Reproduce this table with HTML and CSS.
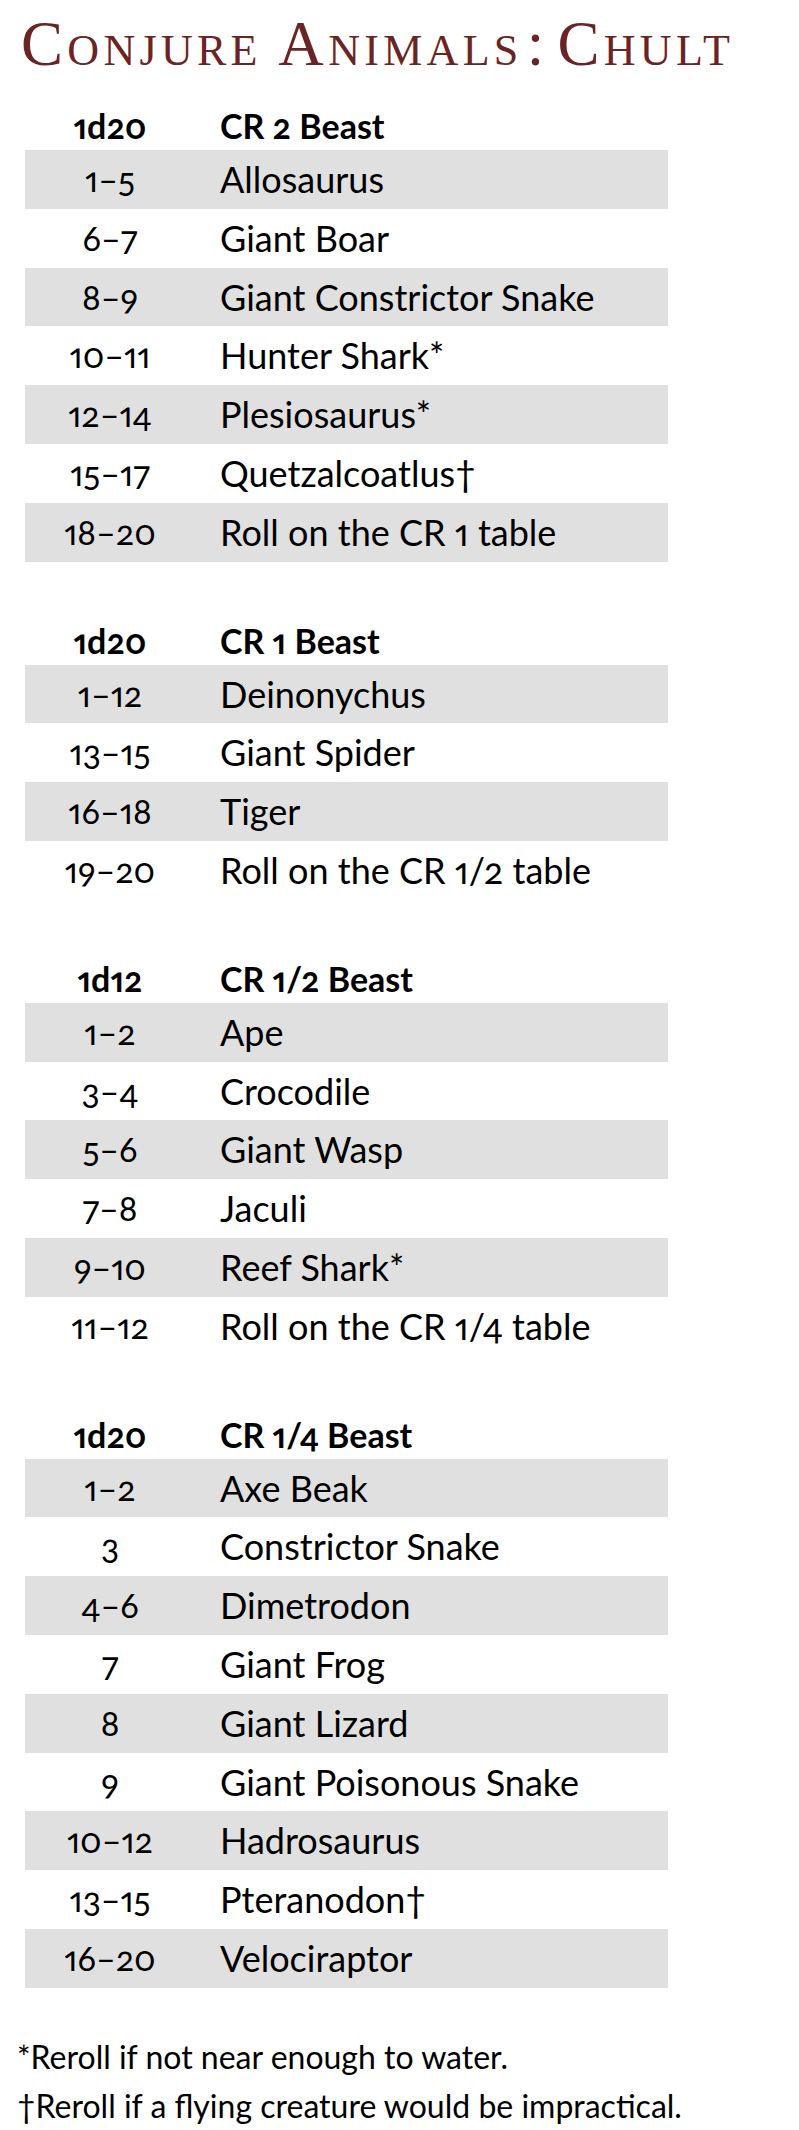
FILE: index.html
```html
<!DOCTYPE html>
<html lang="en">
<head>
<meta charset="utf-8">
<title>Conjure Animals: Chult</title>
<link rel="stylesheet" href="styles.css">
</head>
<body>
<main class="page">
  <h1 class="title">Conjure Animals<span class="colon">:</span>Chult</h1>

  <section class="tables">
    <table class="roll">
      <thead><tr><th class="die">1d20</th><th class="res">CR 2 Beast</th></tr></thead>
      <tbody>
        <tr><td class="die">1–5</td><td class="res">Allosaurus</td></tr>
        <tr><td class="die">6–7</td><td class="res">Giant Boar</td></tr>
        <tr><td class="die">8–9</td><td class="res">Giant Constrictor Snake</td></tr>
        <tr><td class="die">10–11</td><td class="res">Hunter Shark*</td></tr>
        <tr><td class="die">12–14</td><td class="res">Plesiosaurus*</td></tr>
        <tr><td class="die">15–17</td><td class="res">Quetzalcoatlus†</td></tr>
        <tr><td class="die">18–20</td><td class="res">Roll on the CR 1 table</td></tr>
      </tbody>
    </table>

    <table class="roll">
      <thead><tr><th class="die">1d20</th><th class="res">CR 1 Beast</th></tr></thead>
      <tbody>
        <tr><td class="die">1–12</td><td class="res">Deinonychus</td></tr>
        <tr><td class="die">13–15</td><td class="res">Giant Spider</td></tr>
        <tr><td class="die">16–18</td><td class="res">Tiger</td></tr>
        <tr><td class="die">19–20</td><td class="res">Roll on the CR 1/2 table</td></tr>
      </tbody>
    </table>

    <table class="roll">
      <thead><tr><th class="die">1d12</th><th class="res">CR 1/2 Beast</th></tr></thead>
      <tbody>
        <tr><td class="die">1–2</td><td class="res">Ape</td></tr>
        <tr><td class="die">3–4</td><td class="res">Crocodile</td></tr>
        <tr><td class="die">5–6</td><td class="res">Giant Wasp</td></tr>
        <tr><td class="die">7–8</td><td class="res">Jaculi</td></tr>
        <tr><td class="die">9–10</td><td class="res">Reef Shark*</td></tr>
        <tr><td class="die">11–12</td><td class="res">Roll on the CR 1/4 table</td></tr>
      </tbody>
    </table>

    <table class="roll">
      <thead><tr><th class="die">1d20</th><th class="res">CR 1/4 Beast</th></tr></thead>
      <tbody>
        <tr><td class="die">1–2</td><td class="res">Axe Beak</td></tr>
        <tr><td class="die">3</td><td class="res">Constrictor Snake</td></tr>
        <tr><td class="die">4–6</td><td class="res">Dimetrodon</td></tr>
        <tr><td class="die">7</td><td class="res">Giant Frog</td></tr>
        <tr><td class="die">8</td><td class="res">Giant Lizard</td></tr>
        <tr><td class="die">9</td><td class="res">Giant Poisonous Snake</td></tr>
        <tr><td class="die">10–12</td><td class="res">Hadrosaurus</td></tr>
        <tr><td class="die">13–15</td><td class="res">Pteranodon†</td></tr>
        <tr><td class="die">16–20</td><td class="res">Velociraptor</td></tr>
      </tbody>
    </table>
  </section>

  <section class="notes">
    <p class="note">*Reroll if not near enough to water.</p>
    <p class="note">†Reroll if a flying creature would be impractical.</p>
  </section>
</main>
</body>
</html>
```

FILE: styles.css
```css
html, body {
  margin: 0;
  padding: 0;
  background: #ffffff;
}

.page {
  display: flex;
  flex-direction: column;
  font-family: Lato, "Noto Sans", sans-serif;
  color: #000000;
  font-variant-numeric: oldstyle-nums proportional-nums;
}

.title {
  margin: 0;
  padding: 14px 0 0 21px;
  font-family: "Liberation Serif", serif;
  font-weight: normal;
  font-variant: small-caps;
  font-size: 63px;
  line-height: 60px;
  letter-spacing: 4.3px;
  color: #6a2424;
}

.colon {
  margin: 0 9px 0 4px;
}

.tables {
  display: flex;
  flex-direction: column;
  gap: 53px;
  margin: 26px 0 0 25px;
  width: 643px;
}

.roll {
  width: 643px;
  border-collapse: collapse;
  border-spacing: 0;
  font-size: 34px;
}

.roll th,
.roll td {
  padding: 0;
  vertical-align: middle;
}

.roll thead tr {
  height: 50px;
}

.roll th {
  font-weight: bold;
  vertical-align: bottom;
  padding-bottom: 3px;
  line-height: 1.2;
}

.roll tbody tr {
  height: 58.8px;
}

.roll td {
  line-height: 58.8px;
}

.roll td.res {
  font-size: 36px;
}

.roll tbody tr:nth-child(odd) {
  background: #e0e0e0;
}

.roll .die {
  width: 170px;
  text-align: center;
}

.roll .res {
  text-align: left;
  padding-left: 25px;
}

.notes {
  display: flex;
  flex-direction: column;
  margin: 44px 0 0 17px;
}

.note {
  margin: 0;
  font-size: 32px;
  line-height: 49px;
}
```
